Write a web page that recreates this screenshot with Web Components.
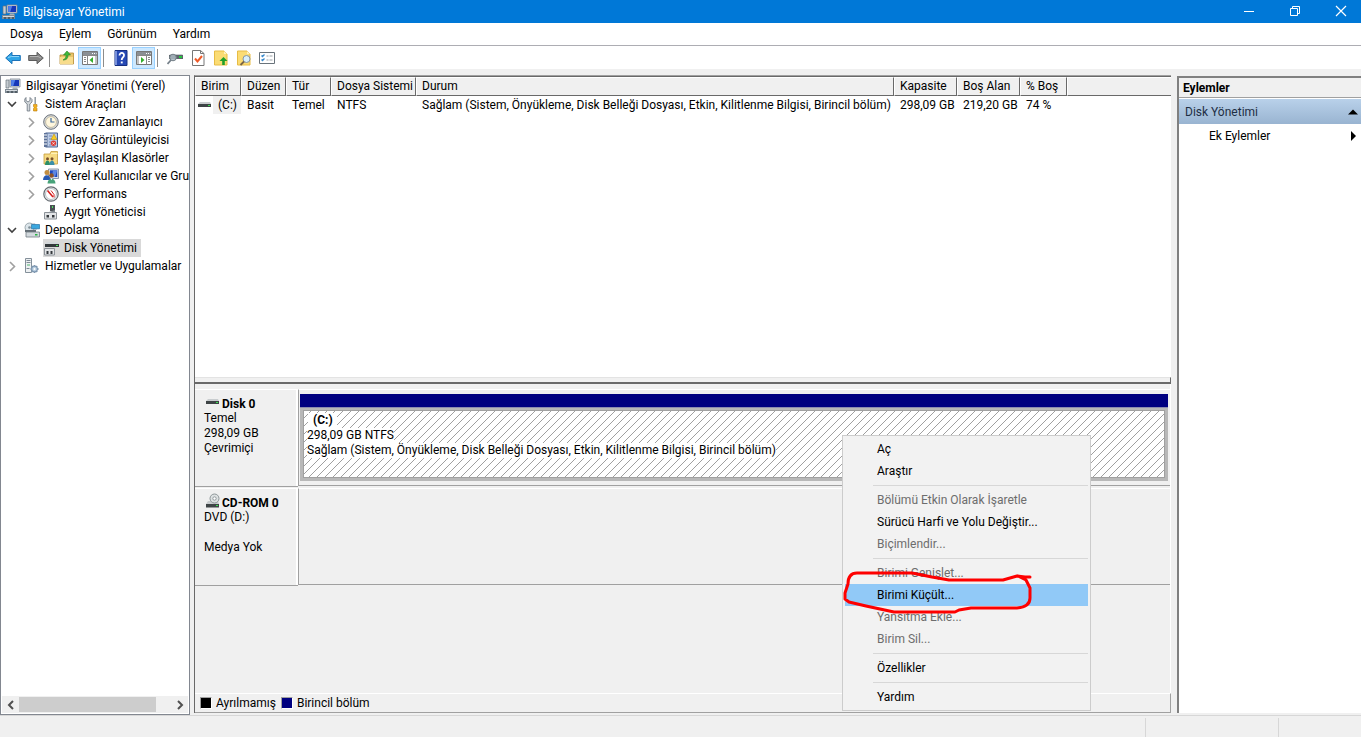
<!DOCTYPE html>
<html lang="tr">
<head>
<meta charset="utf-8">
<title>Bilgisayar Yönetimi</title>
<style>
  html, body { height: 100%; }
  body {
    margin: 0;
    background: #f0f0f0;
    color: #000;
    font: 12px/18px Roboto, "Open Sans", sans-serif;
    overflow: hidden;
  }
</style>
</head>
<body>
<management-console></management-console>

<script>
const ICONS = {
  computer: `<path d="M5 1h10v8H5z" fill="#d8dce0" stroke="#7c8794" stroke-width=".8"/><path d="M6.2 2h7.8v6H6.2z" fill="#1636b8"/><path d="M6.2 2h4l-2 6h-2z" fill="#4f7ee8"/><path d="M8 9.5h4l1 2H7z" fill="#a6aeb6"/><path d="M1 2h3v8H1z" fill="#c6ccd2" stroke="#69737d" stroke-width=".7"/><path d="M0 11h13v4H0z" fill="#7e8993"/><path d="M1 12h11v1H1z" fill="#d6dbe0"/><path d="M2 13.6h2v1H2zm4 0h2v1H6zm4 0h2v1h-2z" fill="#263238"/>`,
  tools: `<path d="M2 1.5v3l2 1.5 2-1.5v-3l2 2v2.5L5.8 8v7H3.200V8L.8 6V3z" fill="#d3d8dc" stroke="#69737d" stroke-width=".8"/><path d="M10.500 1h1.400v7h-1.400z" fill="#8a939b"/><path d="M9.500 8.500h3.500v2l-.7 1 .7 1v2.500H9.500V12.500l.7-1-.7-1z" fill="#f2b01e" stroke="#b97a08" stroke-width=".6"/>`,
  clock: `<circle cx="8" cy="8" r="7.300" fill="#d7dadd" stroke="#6c7278"/><circle cx="8" cy="8" r="5.400" fill="#fff7dd" stroke="#b3a98c" stroke-width=".7"/><path d="M8 4v4h3.500" fill="none" stroke="#3c6a9e" stroke-width="1.200"/>`,
  eventlog: `<path d="M2.500 1h12v14h-12z" fill="#bccbe6" stroke="#4c6795"/><path d="M1 1h3.500v14H1z" fill="#5d7299"/><path d="M1 3h3M1 6h3M1 9h3M1 12h3" stroke="#fff"/><path d="M6 4h3M6 7h3M6 10h2M6 13h2" stroke="#6f88b5"/><path d="M11 2l3 5.500H8z" fill="#f9cc25" stroke="#b58a00" stroke-width=".5"/><circle cx="10.500" cy="11.300" r="2.700" fill="#dc3b36"/><path d="M9.300 10.100l2.400 2.400m0-2.400l-2.400 2.400" stroke="#fff" stroke-width=".7"/>`,
  shared: `<path d="M1 4h6l1-2.500h6.500V14H1z" fill="#f6da83" stroke="#c59c3a" stroke-width=".8"/><path d="M8 3.500h6.500" stroke="#fff2b8"/><circle cx="4.500" cy="8.800" r="1.500" fill="#7a512c"/><circle cx="9" cy="8.800" r="1.500" fill="#7a512c"/><path d="M2 15c0-6 5-6 5 0z" fill="#2d8f66"/><path d="M6.500 15c0-6 5-6 5 0z" fill="#3b8fa8"/>`,
  users: `<path d="M5.500 1h10v9.500h-10z" fill="#dde2e8" stroke="#76839a" stroke-width=".8"/><path d="M7 2.300h7.300V9H7z" fill="#1d48bd"/><path d="M10 2.300h4.300L12 9H9z" fill="#5d86e2"/><circle cx="4" cy="4.500" r="2.500" fill="#c38e40"/><circle cx="8.500" cy="7.500" r="2.300" fill="#8e5428"/><path d="M0 12c0-6.500 7.500-6.500 7.500 0z" fill="#2859b3"/><path d="M4.500 15.500c0-6.500 8-6.500 8 0z" fill="#48a37a"/><path d="M7.500 10.300l1 2 1-2z" fill="#fff"/>`,
  performance: `<circle cx="8" cy="8" r="7.200" fill="#eef0f1" stroke="#666c72" stroke-width="1.200"/><circle cx="8" cy="8" r="5.500" fill="#fff" stroke="#b9bfc4"/><path d="M4.500 4.500l5.500 6.500" stroke="#d41f1f" stroke-width="1.600"/><path d="M8 4.500l3 4v3" fill="none" stroke="#d41f1f"/>`,
  device: `<path d="M7 1h5v6H7z" fill="#4a4f54"/><path d="M9 2h1v2H9z" fill="#51e35f"/><path d="M6 8l6-2v3H6z" fill="#7e858b"/><path d="M1.500 8.500h12v6.500h-12z" fill="#e2e4e6" stroke="#8c9298"/><path d="M3.500 11h2.500v2.500H3.500zm5.500 0h2.500v2.500H9z" fill="#34383c"/>`,
  storage: `<path d="M2 2l9-1 2 7H1z" fill="#c8ced4"/><circle cx="5.500" cy="5.500" r="4.500" fill="#dce5ea" stroke="#8b989f" stroke-width=".8"/><circle cx="5.500" cy="5.500" r="1.300" fill="#7d8d95"/><path d="M7.500 2.500h8v4.300h-8z" fill="#3ba7de" stroke="#2774a8" stroke-width=".7"/><path d="M1 8h11v2H1z" fill="#636d74"/><path d="M2 10h13.500v5H2z" fill="#d3d9dd" stroke="#717c84" stroke-width=".8"/><path d="M11 12h2.500v1.500H11z" fill="#27b443"/>`,
  diskmgmt: `<path d="M2 4l2-2h10l2 2z" fill="#d2d7da"/><path d="M2 4h14v3H2z" fill="#33383b"/><path d="M13 5h2v1h-2z" fill="#4ee35f"/><path d="M1.500 8.500h10v6.500h-10z" fill="#e2e4e6" stroke="#8c9298"/><path d="M3.500 11h2v3h-2zm4 0h2v3h-2z" fill="#34383c"/>`,
  services: `<path d="M1.500.5h6v14h-6z" fill="#edf0f2" stroke="#84909a"/><path d="M2.500 2.500h4m-4 2h4m-4 6h3" stroke="#7e8b95"/><path d="M3 7h3" stroke="#52b36e"/><path d="M10.500 7v8m-4-4h8m-6.800-2.800l5.600 5.600m0-5.600l-5.600 5.600" stroke="#829ab2" stroke-width="2"/><circle cx="10.500" cy="11" r="2.800" fill="#b9cee0" stroke="#6e8aa6" stroke-width=".7"/><circle cx="10.500" cy="11" r="1" fill="#fff"/>`,
  drive: `<path d="M1 7l2-2h10l1 2z" fill="#c9cdcf"/><path d="M1 7h13v3H1z" fill="#3e4446"/><path d="M11 8h2v1h-2z" fill="#3be151"/>`,
  cdrom: `<path d="M1 11l2-3h10l1 3z" fill="#c9cdcf"/><circle cx="9.500" cy="5.500" r="4.500" fill="#dde1e2" stroke="#8d9698"/><circle cx="9.500" cy="5.500" r="1.700" fill="#fff" stroke="#929a9d"/><path d="M1 11h13v3.500H1z" fill="#3e4446"/><path d="M11 12h2v1h-2z" fill="#3be151"/>`,
  back: `<path d="M.7 8L7 2.300v3.200h8.300v5H7v3.200z" fill="#31a5e6" stroke="#1c72b8"/><path d="M3 7.500L6.500 6.500H14" fill="none" stroke="#8fd6fa"/>`,
  forward: `<path d="M15.300 8L9 2.300v3.200H.7v5H9v3.200z" fill="#858585" stroke="#5c5c5c"/><path d="M2 6.500h8l3 1.500" fill="none" stroke="#b4b4b4"/>`,
  folderup: `<path d="M1 5h5l1-2h7.500v11H1z" fill="#e8c36a" stroke="#b58b34" stroke-width=".8"/><path d="M1 7h13v7H1z" fill="#f7dc8c"/><path d="M4 10c4 0 5-2 5-5h2.500L8 1 4.500 5H7c0 2-.5 4-3 5z" fill="#3fb83a" stroke="#268026" stroke-width=".6"/>`,
  treepane: `<path d="M.5 1.500h15v13H.5z" fill="#fff" stroke="#777"/><path d="M1 2h14v3H1z" fill="#8a8f94"/><path d="M10 3.500h1m1 0h1m1 0h.5" stroke="#fff"/><path d="M1 5.500h14M5.500 6v8.500M2 7.500h2m-2 2h2m-2 2h2M14 6v8" stroke="#888"/><path d="M11 7v6L7.500 10z" fill="#33ad2c"/>`,
  help: `<path d="M2 .5h12v15H2z" fill="#2749b5" stroke="#152e80"/><path d="M2 1h2v14H2z" fill="#7790d9"/><path d="M6.500 5.500C6.500 2 11.200 2.300 11 5.300 11 7.500 8.700 7.500 8.700 10" fill="none" stroke="#fff" stroke-width="1.800"/><path d="M7.800 11.500h1.900v1.900H7.800z" fill="#fff"/>`,
  actionpane: `<path d="M.5 1.500h15v13H.5z" fill="#fff" stroke="#777"/><path d="M1 2h14v3H1z" fill="#8a8f94"/><path d="M10 3.500h1m1 0h1m1 0h.5" stroke="#fff"/><path d="M1 5.500h14M10.500 6v8.500M12 7.500h2m-2 2h2m-2 2h2M2 6v8" stroke="#888"/><path d="M5 7v6l3.500-3z" fill="#33ad2c"/>`,
  rescan: `<path d="M2 5l2-1h11l1 1z" fill="#c8ccd0"/><path d="M2 5h14v4H2z" fill="#5d656b"/><path d="M12 6h3v2h-3z" fill="#24c83d"/><circle cx="6" cy="7.500" r="3.300" fill="#aab8c2" fill-opacity=".85" stroke="#737e85"/><path d="M4 10l-3.500 4" stroke="#75808a" stroke-width="1.800"/>`,
  check: `<path d="M2.500.5h8l3.500 3v12H2.500z" fill="#fff" stroke="#777"/><path d="M10.500.5v3H14" fill="none" stroke="#777"/><path d="M5 8.500l2.500 3L12 6" fill="none" stroke="#ef5a28" stroke-width="2"/>`,
  up: `<path d="M1.500 1h9.500l3 3v11H1.500z" fill="#fbdc74" stroke="#e7bc45"/><path d="M11 1v3h3z" fill="#fff2be"/><path d="M10.500 7l4 4h-2.700v4H9.200v-4H6.500z" fill="#20a02a"/>`,
  search: `<path d="M1.500 1h9.500l3 3v11H1.500z" fill="#fbdc74" stroke="#e7bc45"/><path d="M11 1v3h3z" fill="#fff2be"/><circle cx="10.500" cy="9" r="3.500" fill="#d9effa" stroke="#8495a2"/><path d="M8 11.500l-3.500 3.500" stroke="#7b6547" stroke-width="1.800"/>`,
  list: `<path d="M.5 2.500h15v11H.5z" fill="#fff" stroke="#69737b"/><path d="M2.500 5.500l1 1 2-2m-3 5l1 1 2-2" fill="none" stroke="#3888cb" stroke-width="1.300"/><path d="M7.500 6h2m1 0h3m-6 4h2m1 0h3" stroke="#9aa1a6"/>`,
  min: `<path d="M3 8.500h10" stroke="#fff"/>`,
  restore: `<path d="M3.500 5.500h7v7h-7zM5.500 5V3.500h7v7H11" fill="none" stroke="#fff"/>`,
  close: `<path d="M3 3l10 10M13 3L3 13" fill="none" stroke="#fff" stroke-width="1.200"/>`,
  open: `<path d="M4 6l4 4 4-4" fill="none" stroke="#404040" stroke-width="1.600"/>`,
  shut: `<path d="M6 4l4.500 4.500L6 13" fill="none" stroke="#a0a0a0" stroke-width="1.600"/>`,
  left: `<path d="M10 4L6 8l4 4" fill="none" stroke="#505050" stroke-width="2"/>`,
  right: `<path d="M6 4l4 4-4 4" fill="none" stroke="#505050" stroke-width="2"/>`,
  collapse: `<path d="M3 10.500l5-5 5 5z"/>`,
  expand: `<path d="M6 3l5 5-5 5z"/>`,
};

function define(name, html, setup) {
  customElements.define(name, class extends HTMLElement {
    connectedCallback() {
      if (this.shadowRoot) return;
      const root = this.attachShadow({ mode: 'open' });
      const t = document.createElement('template');
      t.innerHTML = (typeof html === 'function' ? html(this) : html);
      root.append(t.content.cloneNode(true));
      if (setup) setup(root, this);
    }
  });
}
const RESET = `*{box-sizing:border-box} button{font:inherit;color:inherit;background:none;border:0;margin:0;padding:0;text-align:left}`;

define('ui-icon', el => `<style>:host{display:block;width:16px;height:16px;flex:none}svg{display:block}</style>
<svg width="16" height="16" viewBox="0 0 16 16" aria-hidden="true">${ICONS[el.getAttribute('name')]}</svg>`);

define('title-bar', `<style>${RESET}
:host{display:flex;align-items:center;flex:none;height:23px;padding-left:2px;background:#0078d7;color:#fff}
span{flex:1;padding-left:5px}
button{width:46px;height:23px;display:grid;place-items:center}
button:last-child{margin-right:-3px}
button ui-icon{margin-top:-2px}
</style>
<ui-icon name="computer"></ui-icon><span><slot></slot></span>
<button aria-label="Simge durumuna küçült"><ui-icon name="min"></ui-icon></button>
<button aria-label="Geri yükle"><ui-icon name="restore"></ui-icon></button>
<button aria-label="Kapat"><ui-icon name="close"></ui-icon></button>`);

define('menu-bar', `<style>${RESET}
:host{display:flex;align-items:center;flex:none;height:23px;padding-left:2px;background:#fff;border-bottom:1px solid #adadb3;box-sizing:border-box}
button{padding:0 8px}
</style>
<button>Dosya</button><button>Eylem</button><button>Görünüm</button><button>Yardım</button>`);

define('tool-button', el => `<style>${RESET}
:host{display:block}
button{display:grid;place-items:center;width:23px;height:22px;border:1px solid transparent}
:host([pressed]) button{background:#cce8ff;border-color:#99d1ff}
</style><button aria-label="${el.getAttribute('label')}"><ui-icon name="${el.getAttribute('icon')}"></ui-icon></button>`);

define('tool-bar', `<style>
:host{display:flex;align-items:center;flex:none;height:23px;padding:1px;background:#fff;box-sizing:border-box}
i{width:1px;height:18px;margin:0 5px 0 2px;background:#8c8c8c}
</style>
<tool-button icon="back" label="Geri"></tool-button><tool-button icon="forward" label="İleri"></tool-button><i></i>
<tool-button icon="folderup" label="Yukarı"></tool-button><tool-button pressed icon="treepane" label="Konsol ağacı"></tool-button><i></i>
<tool-button icon="help" label="Yardım"></tool-button><tool-button pressed icon="actionpane" label="Eylem bölmesi"></tool-button><i></i>
<tool-button icon="rescan" label="Yeniden tara"></tool-button><tool-button icon="check" label="Onayla"></tool-button><tool-button icon="up" label="Yukarı taşı"></tool-button><tool-button icon="search" label="Bul"></tool-button><tool-button icon="list" label="Liste"></tool-button>`);

define('tree-item', el => `<style>
:host{display:flex;align-items:center;height:18px;white-space:nowrap;padding-left:calc(4px + var(--level) * 19px);--level:0}
:host([level="1"]){--level:1}:host([level="2"]){--level:2}
.twist{margin-left:-20px;margin-right:4px}
:host([level="0"]) .twist{display:none}
span{padding:0 4px 0 5px;line-height:18px}
:host([selected]) .hit{background:#d9d9d9}
.hit{display:flex;align-items:center;height:18px}
.gap{width:16px}
</style>${el.getAttribute('state') ? `<ui-icon class="twist" name="${el.getAttribute('state')}"></ui-icon>` : '<b class="twist gap"></b>'}
<div class="hit"><ui-icon name="${el.getAttribute('icon')}"></ui-icon><span><slot></slot></span></div>`,
  (r, el) => el.setAttribute('role', 'treeitem'));

define('console-tree', `<style>${RESET}
:host{display:flex;flex-direction:column;width:190px;flex:none;box-sizing:border-box;background:#fff;border:1px solid #828790;overflow:hidden}
.items{flex:1;overflow:hidden;padding-top:1px}
.bar{display:flex;height:17px;margin:0 1px 1px;background:#f0f0f0;align-items:center}
.bar button{width:17px;height:17px;display:grid;place-items:center}
.track{flex:1;height:15px}.thumb{width:90%;height:15px;background:#cdcdcd}
</style>
<div class="items" role="tree">
<tree-item level="0" icon="computer">Bilgisayar Yönetimi (Yerel)</tree-item>
<tree-item level="1" state="open" icon="tools">Sistem Araçları</tree-item>
<tree-item level="2" state="shut" icon="clock">Görev Zamanlayıcı</tree-item>
<tree-item level="2" state="shut" icon="eventlog">Olay Görüntüleyicisi</tree-item>
<tree-item level="2" state="shut" icon="shared">Paylaşılan Klasörler</tree-item>
<tree-item level="2" state="shut" icon="users">Yerel Kullanıcılar ve Gru</tree-item>
<tree-item level="2" state="shut" icon="performance">Performans</tree-item>
<tree-item level="2" icon="device">Aygıt Yöneticisi</tree-item>
<tree-item level="1" state="open" icon="storage">Depolama</tree-item>
<tree-item level="2" selected icon="diskmgmt">Disk Yönetimi</tree-item>
<tree-item level="1" state="shut" icon="services">Hizmetler ve Uygulamalar</tree-item>
</div>
<div class="bar"><button aria-label="Sola kaydır"><ui-icon name="left"></ui-icon></button><div class="track"><div class="thumb"></div></div><button aria-label="Sağa kaydır"><ui-icon name="right"></ui-icon></button></div>`);

define('volume-list', `<style>${RESET}
:host{display:block;flex:1;min-height:0;background:#fff;border-top:1px solid #696969;overflow:hidden}
table{border-collapse:separate;border-spacing:0;table-layout:fixed;width:100%}
th,td{padding:0 0 0 5px;text-align:left;font-weight:400;white-space:nowrap;height:18px;line-height:18px}
th{background:#f0f0f0;height:19px;line-height:17px;border-left:1px solid #fff;border-top:1px solid #fff;border-right:1px solid #696969;border-bottom:1px solid #696969}
th:last-child{border-right:0}
td{padding-left:6px}
.first{display:flex;align-items:center;height:18px;margin-left:-4px}
.first span{padding:0 3px 0 5px;background:#f0f0f0;flex:1}
</style>
<table><colgroup><col style="width:46px"><col style="width:45px"><col style="width:45px"><col style="width:85px"><col style="width:478px"><col style="width:63px"><col style="width:63px"><col style="width:47px"><col></colgroup>
<thead><tr><th>Birim</th><th>Düzen</th><th>Tür</th><th>Dosya Sistemi</th><th>Durum</th><th>Kapasite</th><th>Boş Alan</th><th>% Boş</th><th></th></tr></thead>
<tbody><tr><td><div class="first"><ui-icon name="drive"></ui-icon><span>(C:)</span></div></td><td>Basit</td><td>Temel</td><td>NTFS</td><td>Sağlam (Sistem, Önyükleme, Disk Belleği Dosyası, Etkin, Kilitlenme Bilgisi, Birincil bölüm)</td><td>298,09 GB</td><td>219,20 GB</td><td>74 %</td><td></td></tr></tbody></table>`);

define('disk-row', el => `<style>
:host{display:flex;flex:none;height:98px;box-sizing:border-box}
.info{width:103px;box-sizing:border-box;border-top:1px solid #fff;border-bottom:1px solid #a0a0a0;box-shadow:inset -2px 0 #fff;padding:5px 0 0 9px;line-height:15px}
.name{display:flex;font-weight:700;height:16px;line-height:18px}
.name ui-icon{margin:-1px 1px 0}
.body{flex:1;min-width:0;height:97px;box-sizing:border-box;border-left:1px solid #a0a0a0;border-top:1px solid #fff;border-bottom:1px solid #a0a0a0;padding:4px 2px 0 1px}
</style><div class="info"><div class="name"><ui-icon name="${el.getAttribute('icon')}"></ui-icon>${el.getAttribute('name')}</div><slot name="info"></slot></div><div class="body"><slot></slot></div>`);

define('disk-volume', () => {
  let d = '';
  for (let i = 0; i < 8; i++) d += `M${i} ${7 - i}h1v1h-1z`;
  return `<style>
:host{display:block}
.cap{height:13px;background:#000080;border-bottom:1px solid #8c8cb0}
.frame{padding:2px 3px 3px;background:#b8b8b8}
.fill{position:relative;height:68px;box-sizing:border-box;border:1px solid #a0a0a0;background:#fff;overflow:hidden}
svg{position:absolute;inset:0;width:100%;height:100%}
.text{position:relative;padding:2px 0 0 3px;line-height:15px}
.text div{width:max-content;background:#fff;height:15px}
.text div:first-child{font-weight:700;margin-left:1px;padding:0 4px 0 5px}
</style><div class="cap"></div><div class="frame"><div class="fill">
<svg aria-hidden="true"><defs><pattern id="h" width="8" height="8" x="-1" y="0" patternUnits="userSpaceOnUse"><path d="${d}" fill="#a0a0a0" shape-rendering="crispEdges"/></pattern></defs><rect width="100%" height="100%" fill="url(#h)"/></svg>
<div class="text"><div>(C:)</div><div>298,09 GB NTFS</div><div>Sağlam (Sistem, Önyükleme, Disk Belleği Dosyası, Etkin, Kilitlenme Bilgisi, Birincil bölüm)</div></div></div></div>`;
});

define('disk-legend', `<style>
:host{display:flex;align-items:center;flex:none;height:20px;box-sizing:border-box;border-top:1px solid #fff;border-right:1px solid #a0a0a0;border-bottom:1px solid #a0a0a0;padding-left:5px}
i{width:12px;height:12px;box-sizing:border-box;border:1px solid #a0a0a0;border-right-color:#fff;border-bottom-color:#fff;background:#000}
.p{background:#000080}
span{padding:0 5px 0 4px}
</style><i></i><span>Ayrılmamış</span><i class="p"></i><span>Birincil bölüm</span>`);

define('disk-view', `<style>
:host{display:flex;flex-direction:column;flex:1;min-width:0;box-sizing:border-box;margin:0 6px 2px 4px;border-left:1px solid #696969;border-top:1px solid #a0a0a0}
.split{flex:none;height:7px;box-sizing:border-box;border-top:1px solid #e3e3e3;border-bottom:2px solid #696969;border-right:1px solid #696969;background:#f0f0f0}
.disks{flex:none;height:309px;padding-top:5px;box-sizing:border-box;border-right:1px solid #fff}
.disks disk-row + disk-row{margin-top:1px}
</style>
<volume-list></volume-list><div class="split"></div>
<div class="disks">
<disk-row icon="drive" name="Disk 0"><div slot="info">Temel<br>298,09 GB<br>Çevrimiçi</div><disk-volume></disk-volume></disk-row>
<disk-row icon="cdrom" name="CD-ROM 0"><div slot="info">DVD (D:)<br><br>Medya Yok</div></disk-row>
</div><disk-legend></disk-legend>`);

define('action-pane', `<style>${RESET}
:host{display:block;width:184px;flex:none;box-sizing:border-box;margin:1px 0 2px;background:#fff;border-left:2px solid #808080;border-top:2px solid #808080}
h2{margin:0;height:20px;padding-left:4px;font-size:12px;line-height:20px;background:#f0f0f0;border-bottom:1px solid #a0a0a0}
button{display:flex;align-items:center;justify-content:space-between;width:100%;height:24px;padding-left:30px}
.group{height:25px;margin-top:1px;padding-left:6px;background:linear-gradient(#b9d1ea,#99b4d1);color:#1e2e44}
</style><h2>Eylemler</h2><button class="group">Disk Yönetimi<ui-icon name="collapse"></ui-icon></button><button>Ek Eylemler<ui-icon name="expand"></ui-icon></button>`);

define('status-bar', `<style>
:host{display:flex;flex:none;height:22px;box-sizing:border-box;border-top:1px solid #d7d7d7}
i{box-sizing:border-box;margin-top:2px;border-left:1px solid #d7d7d7}
.b{width:133px}.c{width:83px}span{flex:1}
</style><span></span><i class="b"></i><i class="c"></i>`);

define('menu-entry', el => `<style>${RESET}
:host{display:block}
button{display:block;width:100%;height:22px;line-height:22px;padding-left:32px}
button:disabled{color:#6d6d6d}
:host([active]) button{background:#91c9f7}
</style><button role="menuitem"${el.hasAttribute('disabled') ? ' disabled' : ''}><slot></slot></button>`);

define('context-menu', `<style>
:host{position:absolute;left:842px;top:435px;width:249px;box-sizing:border-box;padding:2px;background:#f2f2f2;border:1px solid #ccc}
hr{height:1px;margin:3px 0 3px 28px;border:0;background:#d7d7d7}
svg{position:absolute;left:-2px;top:134px}
</style><div role="menu">
<menu-entry>Aç</menu-entry><menu-entry>Araştır</menu-entry><hr>
<menu-entry disabled>Bölümü Etkin Olarak İşaretle</menu-entry><menu-entry>Sürücü Harfi ve Yolu Değiştir...</menu-entry><menu-entry disabled>Biçimlendir...</menu-entry><hr>
<menu-entry disabled>Birimi Genişlet...</menu-entry><menu-entry active>Birimi Küçült...</menu-entry><menu-entry disabled>Yansıtma Ekle...</menu-entry><menu-entry disabled>Birim Sil...</menu-entry><hr>
<menu-entry>Özellikler</menu-entry><hr><menu-entry>Yardım</menu-entry></div>
<svg width="194" height="48" viewBox="841 570 194 48" aria-hidden="true"><path d="M1030 577H1025L1017 576L1003 580H949L932 577L912 573H857Q848 573 848 584L845 593V599L849 602L866 606L894 612H955L959 610L971 608H1017Q1030 607 1030 598V588L1026 580L1018 576" fill="none" stroke="#fe0000" stroke-width="3" stroke-linejoin="round" stroke-linecap="round"/></svg>`);

define('management-console', `<style>
:host{display:flex;flex-direction:column;height:100vh;position:relative;background:#f0f0f0}
main{display:flex;flex:1;min-height:0;padding:6px 0 0}
</style>
<title-bar>Bilgisayar Yönetimi</title-bar><menu-bar></menu-bar><tool-bar></tool-bar>
<main><console-tree></console-tree><disk-view></disk-view><action-pane></action-pane></main>
<status-bar></status-bar><context-menu></context-menu>`);
</script>
</body>
</html>
